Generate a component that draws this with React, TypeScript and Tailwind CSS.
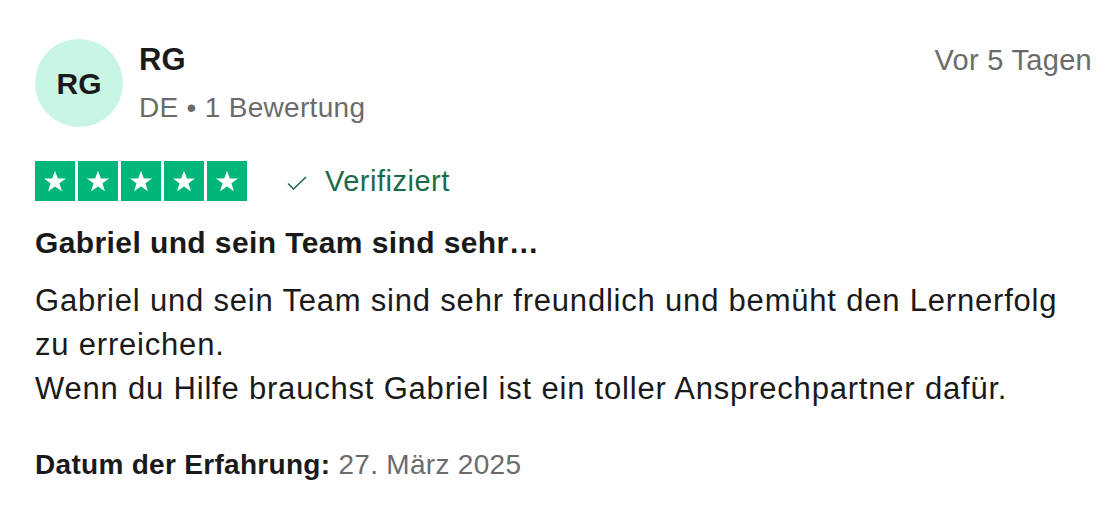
const Star = () => (
  <div className="w-[40px] h-[40px] bg-[#00b67a] flex items-center justify-center">
    <svg viewBox="0 0 24 24" className="w-[26px] h-[26px]" fill="#fff">
      <path d="M12 2.5l2.6 7.1h7.6l-6.1 4.5 2.3 7.3L12 17l-6.4 4.4 2.3-7.3-6.1-4.5h7.6z" />
    </svg>
  </div>
);

export default function App() {
  return (
    <div className="w-[1120px] h-[510px] bg-white text-[#1a1a1a] font-['Liberation_Sans',Arial,sans-serif] pl-[35px] pr-[28px] pt-[39px]">
      <div className="flex items-start justify-between">
        <div className="flex items-start gap-[16px]">
          <div className="w-[88px] h-[88px] rounded-full bg-[#c9f5e5] flex items-center justify-center text-[30px] font-bold">
            RG
          </div>
          <div className="flex flex-col pt-[1px]">
            <span className="text-[31px] font-bold leading-[40px]">RG</span>
            <span className="mt-[8px] text-[28px] tracking-[0.3px] text-[#6b6b6b] leading-[40px]">DE • 1 Bewertung</span>
          </div>
        </div>
        <span className="text-[29px] tracking-[0.3px] text-[#6b6b6b] leading-[44px] -mt-[1px]">Vor 5 Tagen</span>
      </div>

      <div className="flex items-center mt-[33px]">
        <div className="flex gap-[3px]">
          <Star />
          <Star />
          <Star />
          <Star />
          <Star />
        </div>
        <svg viewBox="0 0 24 24" className="w-[24px] h-[24px] ml-[38px] mt-[4px]" fill="none" stroke="#1c6b46" strokeWidth="1.6">
          <path d="M3 12.5l5.5 5.5L21 6" />
        </svg>
        <span className="ml-[16px] text-[29px] tracking-[0.5px] text-[#1c6b46] leading-[40px]">Verifiziert</span>
      </div>

      <h2 className="mt-[24px] text-[30px] tracking-[0.4px] font-bold leading-[36px]">Gabriel und sein Team sind sehr…</h2>

      <p className="mt-[18px] text-[31px] tracking-[0.8px] leading-[44px] w-[1045px]">
        Gabriel und sein Team sind sehr freundlich und bemüht den Lernerfolg zu erreichen.
        <br />
        Wenn du Hilfe brauchst Gabriel ist ein toller Ansprechpartner dafür.
      </p>

      <p className="mt-[38px] text-[28px] tracking-[0.3px] leading-[32px]">
        <span className="font-bold">Datum der Erfahrung:</span>{" "}
        <span className="text-[#6b6b6b]">27. März 2025</span>
      </p>
    </div>
  );
}
